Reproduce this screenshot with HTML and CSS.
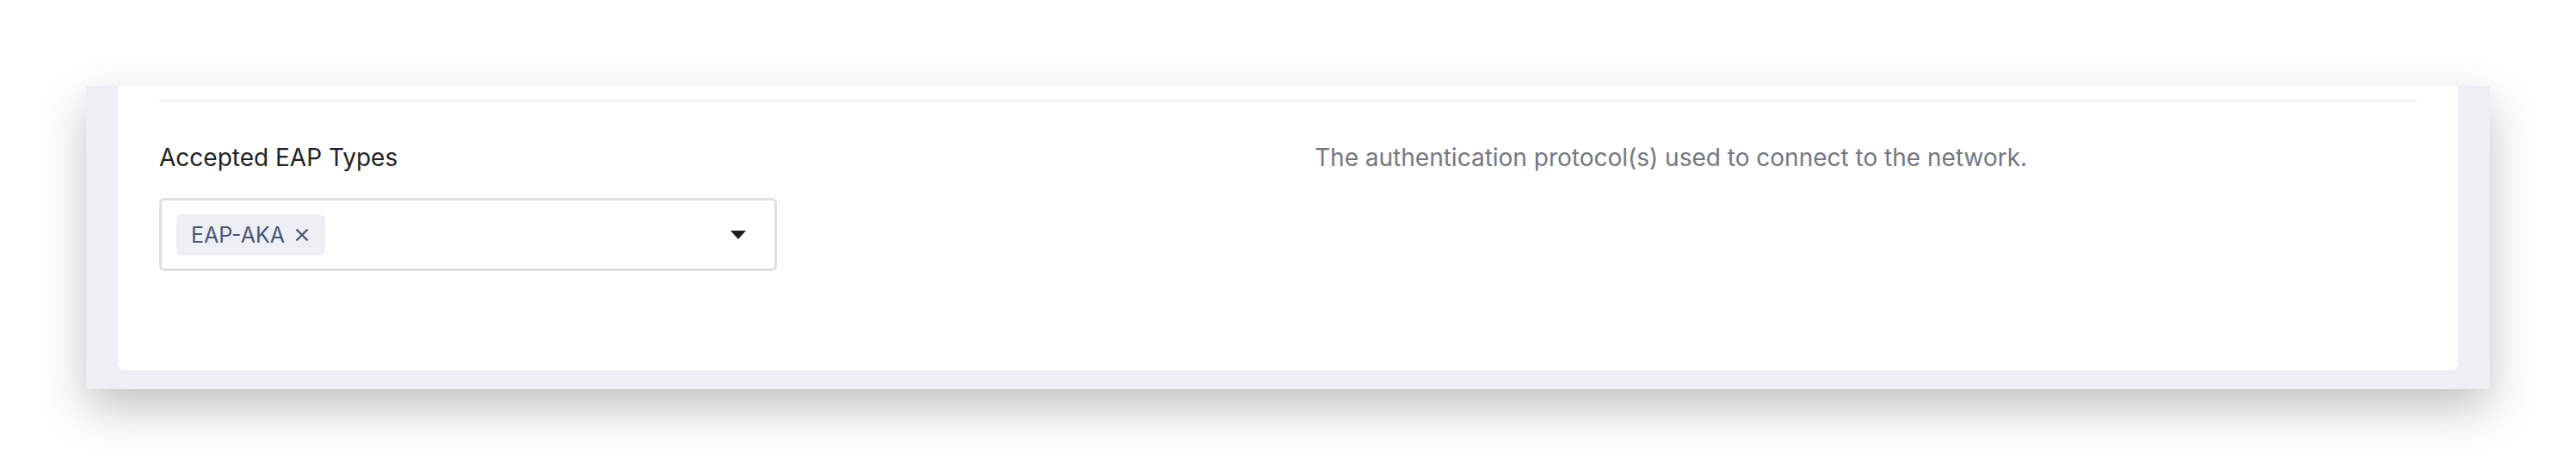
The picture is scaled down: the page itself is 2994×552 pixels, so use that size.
FILE: index.html
```html
<!DOCTYPE html>
<html lang="en">

<head>
    <meta charset="utf-8">
    <meta name="viewport" content="width=device-width, initial-scale=1">
    <title>Accepted EAP Types</title>
    <link rel="stylesheet" href="styles.css">
</head>

<body>
    <div class="page">
        <div class="frame">
            <div class="card">
                <div class="divider"></div>
                <div class="field">
                    <div class="field-main">
                        <label class="field-label">Accepted EAP Types</label>
                        <div class="select">
                            <div class="chips">
                                <span class="chip">EAP-AKA
                                    <svg class="chip-close" viewBox="0 0 18 18" width="18" height="18">
                                        <path d="M2.5 2.5 L15.5 15.5 M15.5 2.5 L2.5 15.5" stroke="currentColor" stroke-width="2.4" fill="none" />
                                    </svg>
                                </span>
                            </div>
                            <svg class="select-arrow" viewBox="0 0 18 10" width="18" height="10">
                                <path d="M0 0 H18 L9 10 Z" fill="currentColor" />
                            </svg>
                        </div>
                    </div>
                    <p class="field-help">The authentication protocol(s) used to connect to the network.</p>
                </div>
            </div>
        </div>
    </div>
</body>

</html>
```

FILE: styles.css
```css
html, body {
    margin: 0;
    background: #ffffff;
}

body {
    font-family: Inter, "Liberation Sans", sans-serif;
    font-size: 28px;
    line-height: 40px;
    color: #1e1f24;
}

.page {
    padding: 100px 100px 0;
    min-height: 552px;
    box-sizing: border-box;
}

.frame {
    background: #eeeff4;
    padding: 0 37px 22px;
    box-shadow: 0 22px 50px rgba(0, 0, 0, 0.24);
}

.card {
    background: #ffffff;
    border-radius: 0 0 8px 8px;
    padding: 16px 48px 0;
    height: 314px;
}

.divider {
    height: 2px;
    background: #f0f0f2;
}

.field {
    display: grid;
    grid-template-columns: 50% 1fr;
    column-gap: 31px;
    margin-top: 45px;
}

.field-label {
    display: block;
    margin-bottom: 27px;
}

.select {
    display: flex;
    align-items: center;
    justify-content: space-between;
    width: 718px;
    height: 85px;
    box-sizing: border-box;
    border: 3px solid #e0e0e2;
    border-radius: 6px;
    padding: 0 33px 0 17px;
}

.chips {
    display: flex;
    gap: 8px;
}

.chip {
    display: inline-flex;
    align-items: center;
    gap: 11px;
    height: 48px;
    padding: 0 18px 0 17px;
    background: #eeeff4;
    border-radius: 6px;
    color: #4b5672;
    font-size: 25px;
}

.chip-close {
    display: block;
    margin-top: 1px;
}

.select-arrow {
    display: block;
    color: #1e1f24;
}

.field-help {
    margin: 0;
    color: #76767f;
}
```
